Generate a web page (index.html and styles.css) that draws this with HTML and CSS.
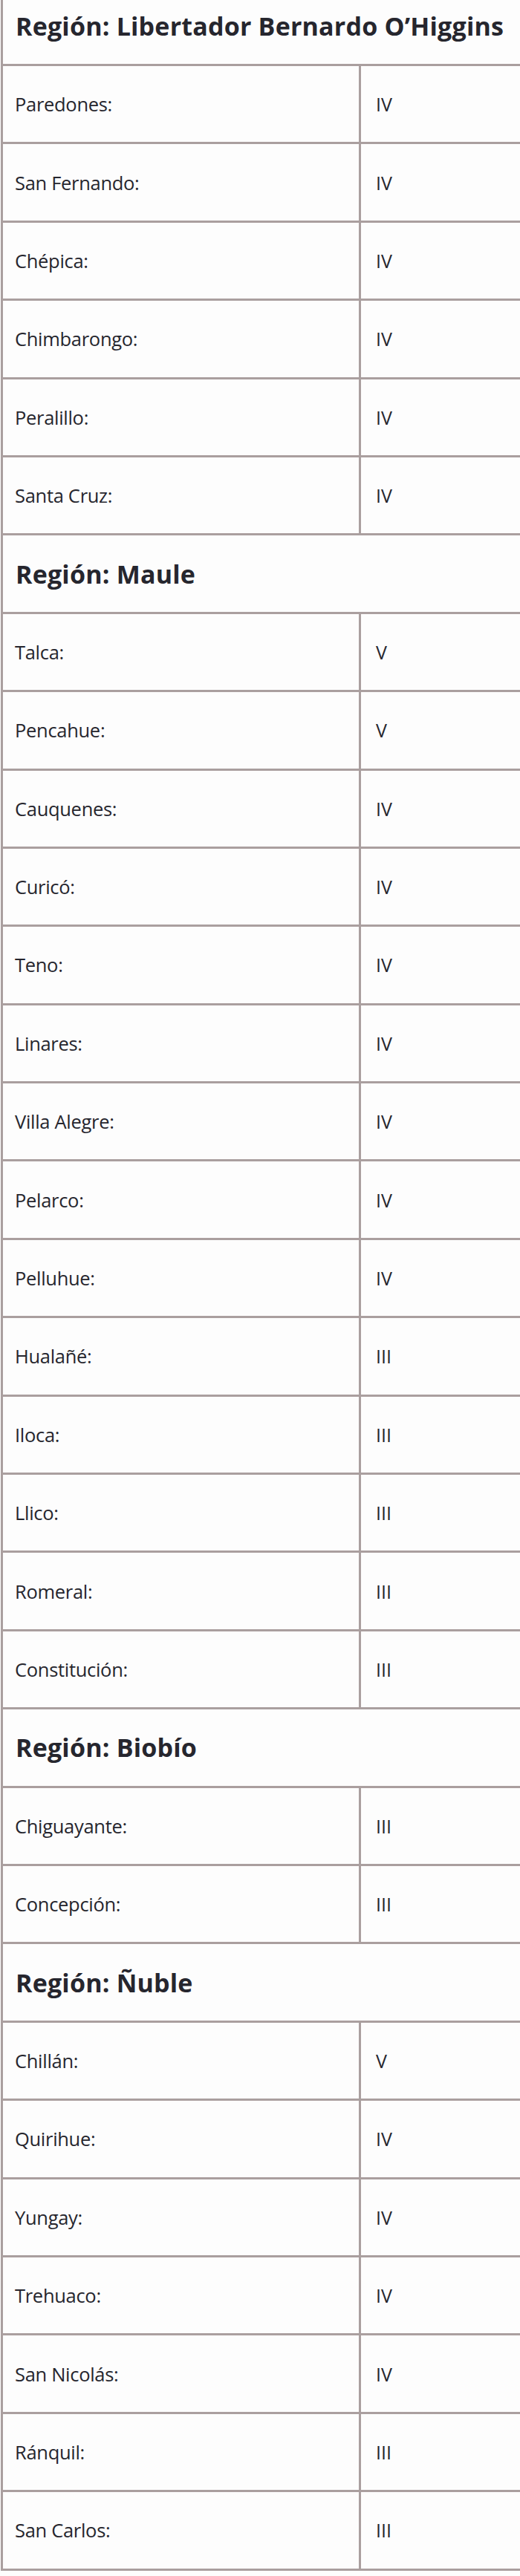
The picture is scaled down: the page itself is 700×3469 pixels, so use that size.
FILE: index.html
```html
<!DOCTYPE html>
<html lang="es">
<head>
<meta charset="utf-8">
<title>Comunas por región</title>
<link rel="stylesheet" href="styles.css">
</head>
<body>
<table class="tbl">
<tbody class="tbl-body">
<tr class="row"><th class="region" colspan="2">Región: Libertador Bernardo O’Higgins</th></tr>
<tr class="row"><td class="name">Paredones:</td><td class="val">IV</td></tr>
<tr class="row"><td class="name">San Fernando:</td><td class="val">IV</td></tr>
<tr class="row"><td class="name">Chépica:</td><td class="val">IV</td></tr>
<tr class="row"><td class="name">Chimbarongo:</td><td class="val">IV</td></tr>
<tr class="row"><td class="name">Peralillo:</td><td class="val">IV</td></tr>
<tr class="row"><td class="name">Santa Cruz:</td><td class="val">IV</td></tr>
<tr class="row"><th class="region" colspan="2">Región: Maule</th></tr>
<tr class="row"><td class="name">Talca:</td><td class="val">V</td></tr>
<tr class="row"><td class="name">Pencahue:</td><td class="val">V</td></tr>
<tr class="row"><td class="name">Cauquenes:</td><td class="val">IV</td></tr>
<tr class="row"><td class="name">Curicó:</td><td class="val">IV</td></tr>
<tr class="row"><td class="name">Teno:</td><td class="val">IV</td></tr>
<tr class="row"><td class="name">Linares:</td><td class="val">IV</td></tr>
<tr class="row"><td class="name">Villa Alegre:</td><td class="val">IV</td></tr>
<tr class="row"><td class="name">Pelarco:</td><td class="val">IV</td></tr>
<tr class="row"><td class="name">Pelluhue:</td><td class="val">IV</td></tr>
<tr class="row"><td class="name">Hualañé:</td><td class="val">III</td></tr>
<tr class="row"><td class="name">Iloca:</td><td class="val">III</td></tr>
<tr class="row"><td class="name">Llico:</td><td class="val">III</td></tr>
<tr class="row"><td class="name">Romeral:</td><td class="val">III</td></tr>
<tr class="row"><td class="name">Constitución:</td><td class="val">III</td></tr>
<tr class="row"><th class="region" colspan="2">Región: Biobío</th></tr>
<tr class="row"><td class="name">Chiguayante:</td><td class="val">III</td></tr>
<tr class="row"><td class="name">Concepción:</td><td class="val">III</td></tr>
<tr class="row"><th class="region" colspan="2">Región: Ñuble</th></tr>
<tr class="row"><td class="name">Chillán:</td><td class="val">V</td></tr>
<tr class="row"><td class="name">Quirihue:</td><td class="val">IV</td></tr>
<tr class="row"><td class="name">Yungay:</td><td class="val">IV</td></tr>
<tr class="row"><td class="name">Trehuaco:</td><td class="val">IV</td></tr>
<tr class="row"><td class="name">San Nicolás:</td><td class="val">IV</td></tr>
<tr class="row"><td class="name">Ránquil:</td><td class="val">III</td></tr>
<tr class="row"><td class="name">San Carlos:</td><td class="val">III</td></tr>
</tbody>
</table>
</body>
</html>
```

FILE: styles.css
```css
html, body {
  margin: 0;
  padding: 0;
  background: #fdfdfd;
  overflow: hidden;
}

.tbl {
  display: block;
  margin: -19.4px 0 0 1px;
  width: 760px;
  font-family: "Open Sans", "Noto Sans", sans-serif;
  color: #26262e;
}

.tbl-body {
  display: grid;
  grid-template-columns: 482px 1fr;
  grid-auto-rows: 105.4px;
  border-top: 3px solid #aa9f9f;
  border-left: 3px solid #aa9f9f;
}

.row {
  display: contents;
}

.region,
.name,
.val {
  box-sizing: border-box;
  display: flex;
  align-items: center;
  padding: 0 0 0 16px;
  border-bottom: 3px solid #aa9f9f;
  text-align: left;
  white-space: nowrap;
}

.region {
  grid-column: 1 / -1;
  font-size: 34px;
  font-weight: 700;
  font-stretch: 96%;
  letter-spacing: 0.2px;
  padding-left: 17px;
}

.name {
  font-size: 25.5px;
  font-weight: 400;
  font-stretch: 90%;
  letter-spacing: -0.3px;
  border-right: 3px solid #aa9f9f;
}

.val {
  font-size: 25px;
  font-weight: 400;
  padding-left: 20px;
}
```
